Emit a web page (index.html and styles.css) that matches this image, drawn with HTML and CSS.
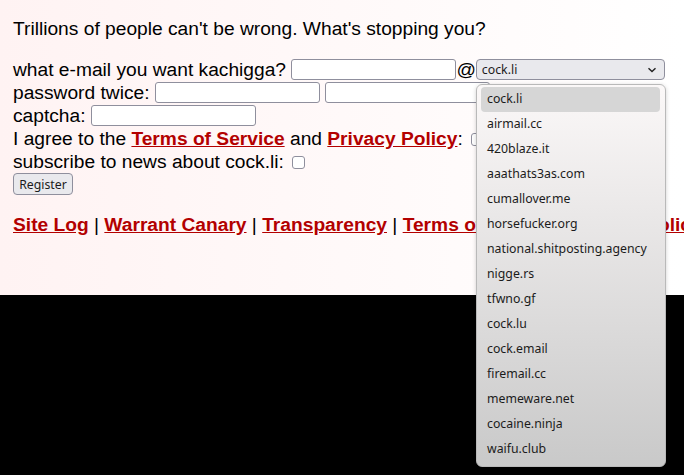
FILE: index.html
```html
<!DOCTYPE html>
<html lang="en">
<head>
  <meta charset="UTF-8">
  <meta name="viewport" content="width=device-width, initial-scale=1.0">
  <title>cock.li - register</title>
  <link rel="stylesheet" href="styles.css">
</head>
<body>
  <div class="page">
    <p class="intro">Trillions of people can't be wrong. What's stopping you?</p>

    <form class="register">
      <div class="row">what e-mail you want kachigga? <input type="text" class="field"><span class="at">@</span><div class="select"><span>cock.li</span><svg width="10" height="6" viewBox="0 0 10 6"><path d="M1.5 1.2 L5 4.6 L8.5 1.2" fill="none" stroke="#222" stroke-width="1.4"/></svg></div></div>
      <div class="row">password twice: <input type="password" class="field"> <input type="password" class="field"></div>
      <div class="row">captcha: <input type="text" class="field"></div>
      <div class="row">I agree to the <a href="#">Terms of Service</a> and <a href="#">Privacy Policy</a>: <span class="check"></span></div>
      <div class="row">subscribe to news about cock.li: <span class="check"></span></div>
      <div class="row"><button type="button" class="btn">Register</button></div>
    </form>

    <p class="links"><a href="#">Site Log</a> | <a href="#">Warrant Canary</a> | <a href="#">Transparency</a> | <a href="#">Terms of Service</a> | <a href="#">Privacy Policy</a></p>

    <!-- open domain dropdown -->
    <ul class="popup">
      <li class="active">cock.li</li>
      <li>airmail.cc</li>
      <li>420blaze.it</li>
      <li>aaathats3as.com</li>
      <li>cumallover.me</li>
      <li>horsefucker.org</li>
      <li>national.shitposting.agency</li>
      <li>nigge.rs</li>
      <li>tfwno.gf</li>
      <li>cock.lu</li>
      <li>cock.email</li>
      <li>firemail.cc</li>
      <li>memeware.net</li>
      <li>cocaine.ninja</li>
      <li>waifu.club</li>
    </ul>
  </div>
</body>
</html>
```

FILE: styles.css
```css
html {
  overflow: hidden;
  background: #000;
}

body {
  margin: 0;
  height: 475px;
  background: #000;
}

.page {
  position: relative;
  height: 295px;
  box-sizing: border-box;
  padding: 1px 0 0 13px;
  background: linear-gradient(to right, #fff3f3, #ffffff);
  font-family: "Liberation Sans", Arial, sans-serif;
  font-size: 19.2px;
  color: #000;
  white-space: nowrap;
}

.intro {
  margin: 16px 0 18px;
  line-height: 23px;
}

.row {
  height: 23px;
  line-height: 23px;
}

.field {
  box-sizing: border-box;
  width: 165px;
  height: 21px;
  margin: 1px 0 0;
  vertical-align: top;
  border: 1px solid #8f8f9d;
  border-radius: 3px;
  background: #fff;
  padding: 0 4px;
}

.at {
  vertical-align: top;
}

.select {
  display: inline-flex;
  align-items: center;
  justify-content: space-between;
  box-sizing: border-box;
  width: 189px;
  height: 21px;
  margin-top: 1px;
  vertical-align: top;
  padding: 0 7px 0 5px;
  border: 1px solid #8f8f9d;
  border-radius: 4px;
  background: #e9e9ed;
  font-family: "Noto Sans", sans-serif;
  font-size: 12.3px;
  color: #1b1b1b;
}

a {
  color: #b30000;
  font-weight: bold;
}

.check {
  display: inline-block;
  box-sizing: border-box;
  width: 13px;
  height: 13px;
  margin-left: 3px;
  vertical-align: -1px;
  border: 1px solid #8f8f9d;
  border-radius: 3px;
  background: #fff;
}

.btn {
  box-sizing: border-box;
  width: 60px;
  height: 22px;
  vertical-align: top;
  padding: 0;
  border: 1px solid #8f8f9d;
  border-radius: 4px;
  background: #e9e9ed;
  font-family: "Noto Sans", sans-serif;
  font-size: 12.3px;
  color: #1b1b1b;
}

.links {
  margin: 17px 0 0;
  line-height: 23px;
}

.popup {
  position: absolute;
  left: 476px;
  top: 84px;
  width: 190px;
  margin: 0;
  padding: 2px 5px 4px 4px;
  box-sizing: border-box;
  list-style: none;
  border: 1px solid #b9b9b9;
  border-radius: 6px;
  background: linear-gradient(#fbf8f8, #c9c9c9);
  box-shadow: 0 1px 4px rgba(0, 0, 0, 0.18);
  font-family: "Noto Sans", sans-serif;
  font-size: 12.3px;
  color: #1b1b1b;
}

.popup li {
  height: 25px;
  line-height: 24px;
  padding-left: 6px;
  border-radius: 4px;
}

.popup li.active {
  background: #d6d6d6;
}
```
